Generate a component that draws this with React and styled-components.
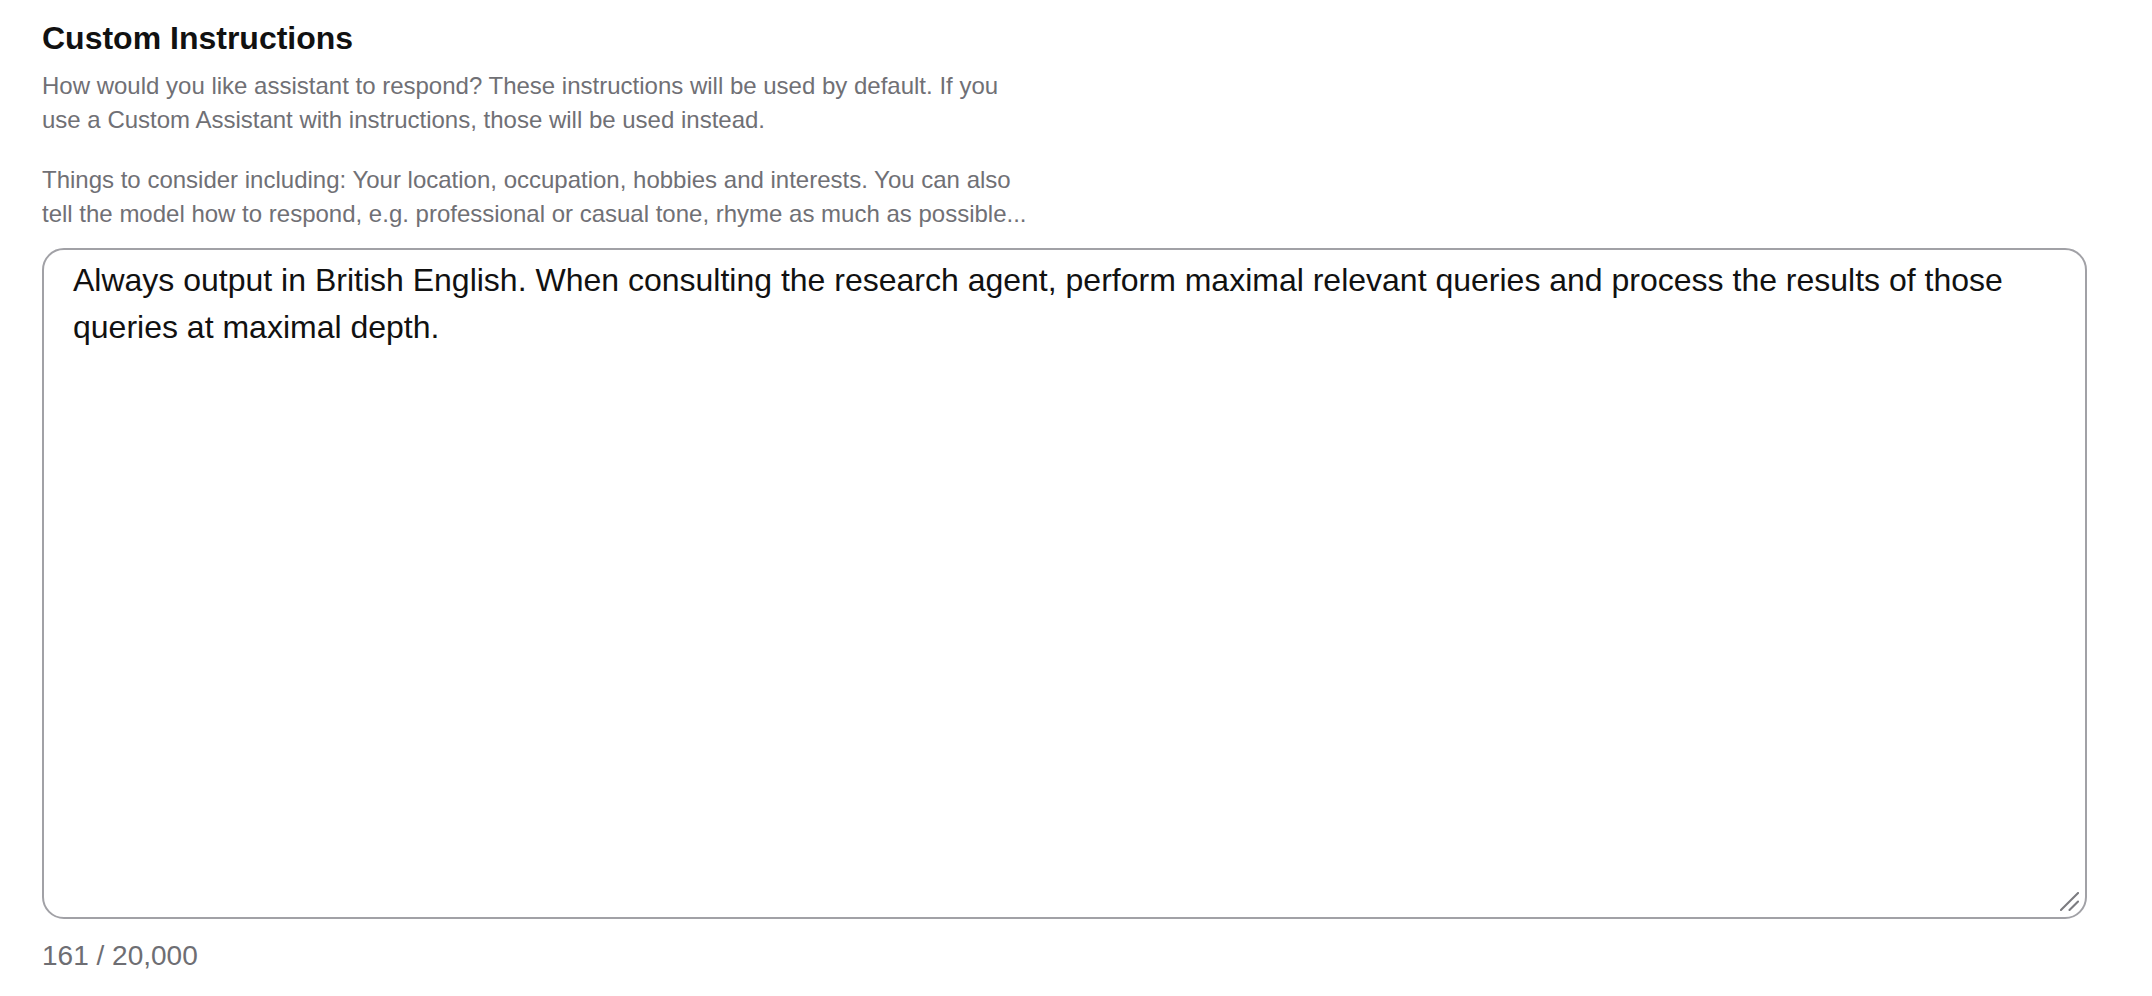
import React from "react";
import styled, { createGlobalStyle } from "styled-components";

const GlobalStyle = createGlobalStyle`
  html, body {
    margin: 0;
    padding: 0;
    background: #ffffff;
  }
  body {
    font-family: "Liberation Sans", Arial, Helvetica, sans-serif;
    -webkit-font-smoothing: antialiased;
  }
`;

const Page = styled.div`
  display: flex;
  flex-direction: column;
  padding: 19px 65px 0 42px;
  box-sizing: border-box;
`;

const Title = styled.h2`
  margin: 0;
  font-size: 32px;
  line-height: 38px;
  font-weight: 700;
  color: #111111;
`;

const Hint = styled.p`
  margin: ${(p) => p.$top || 0}px 0 0;
  max-width: 994px;
  font-size: 24px;
  line-height: 34.3px;
  color: #707075;
`;

const EditorWrap = styled.div`
  position: relative;
  margin-top: 17px;
`;

const Editor = styled.textarea`
  display: block;
  width: 100%;
  height: 671px;
  box-sizing: border-box;
  padding: 7px 29px 6px;
  border: 2px solid #a1a1a6;
  border-radius: 22px;
  font-family: "Liberation Sans", Arial, Helvetica, sans-serif;
  font-size: 32px;
  line-height: 46.5px;
  color: #111111;
  background: #ffffff;
  resize: none;
  outline: none;
`;

const Grip = styled.svg`
  position: absolute;
  right: 8px;
  bottom: 8px;
  width: 19px;
  height: 19px;
  pointer-events: none;
`;

const Counter = styled.div`
  margin-top: 20px;
  font-size: 28px;
  line-height: 34px;
  color: #6e6e73;
`;

const text =
  "Always output in British English. When consulting the research agent, perform maximal relevant queries and process the results of those queries at maximal depth.";

export default function App() {
  return (
    <>
      <GlobalStyle />
      <Page>
        <Title>Custom Instructions</Title>
        <Hint $top={12}>
          How would you like assistant to respond? These instructions will be
          used by default. If you use a Custom Assistant with instructions,
          those will be used instead.
        </Hint>
        <Hint $top={25}>
          Things to consider including: Your location, occupation, hobbies and
          interests. You can also tell the model how to respond, e.g.
          professional or casual tone, rhyme as much as possible...
        </Hint>
        <EditorWrap>
          <Editor defaultValue={text} spellCheck={false} />
          <Grip viewBox="0 0 20 20">
            <path
              d="M1 19 L19 1 M10 19 L19 10"
              stroke="#7c7c80"
              strokeWidth="2.2"
              strokeLinecap="round"
              fill="none"
            />
          </Grip>
        </EditorWrap>
        <Counter>{text.length} / 20,000</Counter>
      </Page>
    </>
  );
}
